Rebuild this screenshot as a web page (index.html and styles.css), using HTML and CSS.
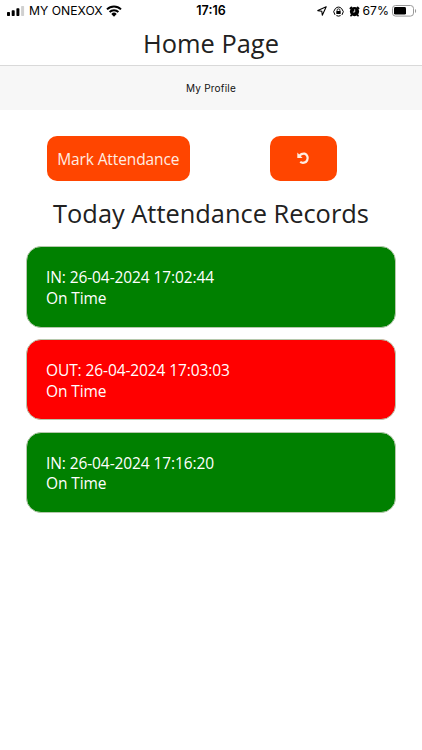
FILE: index.html
```
<!DOCTYPE html>
<html lang="en">
<head>
    <meta charset="UTF-8">
    <meta name="viewport" content="width=device-width, initial-scale=1.0">
    <title>Home Page</title>
    <link rel="stylesheet" href="styles.css">
</head>
<body>
    <div class="status-bar">
        <div class="status-left">
            <svg class="signal" width="18" height="10" viewBox="0 0 18 10">
                <rect x="0" y="6" width="3" height="4" rx="0.7"/>
                <rect x="4.7" y="4.3" width="3" height="5.7" rx="0.7"/>
                <rect x="9.4" y="2.2" width="3" height="7.8" rx="0.7"/>
                <rect class="dim" x="14.1" y="0" width="3" height="10" rx="0.7"/>
            </svg>
            <span class="carrier">MY ONEXOX</span>
            <svg class="wifi" width="16" height="12" viewBox="0 0 16 12">
                <path d="M1 4.4a10 10 0 0 1 14 0M3.6 7a6.3 6.3 0 0 1 8.8 0" fill="none" stroke="#000" stroke-width="2"/>
                <path d="M5.3 8.9a3.9 3.9 0 0 1 5.4 0L8 11.7z"/>
            </svg>
        </div>
        <div class="clock">17:16</div>
        <div class="status-right">
            <svg width="10" height="10" viewBox="0 0 10 10">
                <path d="M9.2.8L.8 4.6l4 .6.5 4z" fill="none" stroke="#000" stroke-width="1.1" stroke-linejoin="round"/>
            </svg>
            <svg class="lock" width="11" height="11" viewBox="0 0 11 11">
                <path d="M2 8.9A4.6 4.6 0 1 1 9 8.9M3.4 9.6a4.6 4.6 0 0 0 4.2 0" fill="none" stroke="#000" stroke-width="1"/>
                <rect x="3.3" y="5" width="4.4" height="3" rx="0.5"/>
                <path d="M4.1 5V4.2a1.4 1.4 0 0 1 2.8 0V5" fill="none" stroke="#000" stroke-width="0.8"/>
            </svg>
            <svg class="alarm" width="11" height="11" viewBox="0 0 11 11">
                <circle cx="5.5" cy="5.6" r="4.6"/>
                <path d="M1.4 2.3L2.4 1.4M9.6 2.3L8.6 1.4M2.4 9.2l-.4.4M8.6 9.2l.4.4" stroke="#000" stroke-width="1.8" stroke-linecap="round"/>
                <path d="M5.7 3.3V6H3.9" fill="none" stroke="#fff" stroke-width="0.8"/>
            </svg>
            <span class="percent">67%</span>
            <svg class="battery" width="25" height="12" viewBox="0 0 25 12">
                <rect x="0.5" y="0.5" width="21" height="10.6" rx="3" fill="none" stroke="#999"/>
                <rect x="2" y="2" width="12" height="7.6" rx="1.4"/>
                <path d="M23 4v4c1.5-.6 1.5-3.4 0-4z" fill="#999"/>
            </svg>
        </div>
    </div>

    <h1 class="title">Home Page</h1>

    <nav class="tabs">
        <a class="tab">My Profile</a>
    </nav>

    <main class="content">
        <div class="actions">
            <button class="btn mark">Mark Attendance</button>
            <button class="btn refresh" aria-label="Refresh">
                <svg width="13" height="13" viewBox="0 0 13 13">
                    <path d="M2.4 3.7C4 1.9 6 1.5 7.6 1.7A4.7 4.7 0 1 1 3.2 9.9" fill="none" stroke="#ffece2" stroke-width="2.3"/>
                    <path d="M.3.6V5.9H5.6z" fill="#ffece2"/>
                </svg>
            </button>
        </div>

        <h2 class="heading">Today Attendance Records</h2>

        <div class="records">
            <div class="record in">
                <div>IN: 26-04-2024 17:02:44</div>
                <div>On Time</div>
            </div>
            <div class="record out">
                <div>OUT: 26-04-2024 17:03:03</div>
                <div>On Time</div>
            </div>
            <div class="record in">
                <div>IN: 26-04-2024 17:16:20</div>
                <div>On Time</div>
            </div>
        </div>
    </main>
</body>
</html>
```

FILE: styles.css
```
* {
    box-sizing: border-box;
}

body {
    margin: 0;
    height: 750px;
    overflow: hidden;
    background-color: #fff;
    color: #212121;
    font-family: 'Open Sans', 'Noto Sans', sans-serif;
}

.status-bar {
    display: grid;
    grid-template-columns: 1fr auto 1fr;
    align-items: center;
    height: 22px;
    padding: 0 5px 0 7px;
    color: #000;
    font-family: Inter, 'Liberation Sans', sans-serif;
    font-size: 12.2px;
    line-height: 22px;
}

.status-left,
.status-right {
    display: flex;
    align-items: center;
}

.status-right {
    justify-content: flex-end;
}

.signal {
    margin-right: 4px;
}

.dim {
    fill: #d0d0d0;
}

.wifi {
    margin-left: 3px;
}

.clock {
    padding-right: 2px;
    font-size: 12.5px;
    font-weight: 600;
}

.lock {
    margin-left: 6px;
}

.alarm {
    margin-left: 5px;
}

.percent {
    margin-left: 3px;
}

.battery {
    margin-left: 3px;
}

.title {
    height: 43px;
    margin: 0;
    font-size: 25.4px;
    font-weight: 400;
    line-height: 43px;
    text-align: center;
}

.tabs {
    display: flex;
    justify-content: center;
    align-items: center;
    height: 45px;
    border-top: 1px solid #d9d9d9;
    background-color: #f7f7f7;
}

.tab {
    color: #111;
    font-family: Inter, sans-serif;
    font-size: 10px;
    letter-spacing: 0.2px;
}

.content {
    padding: 26px 26px 0;
}

.actions {
    display: flex;
    justify-content: space-between;
    padding: 0 59px 0 21px;
}

.btn {
    display: flex;
    justify-content: center;
    align-items: center;
    height: 44.5px;
    padding: 0;
    border: none;
    border-radius: 10px;
    background-color: #ff4500;
    color: #ffece2;
    font-family: inherit;
    font-size: 15.5px;
    letter-spacing: -0.11px;
}

.mark {
    width: 142.5px;
    padding-top: 1px;
}

.refresh {
    width: 67px;
}

.heading {
    margin: 13px 0 13.5px;
    font-size: 25.4px;
    font-weight: 400;
    line-height: 39px;
    text-align: center;
}

.records {
    display: flex;
    flex-direction: column;
    gap: 11.2px;
}

.record {
    height: 81.6px;
    padding: 20px 19px;
    border: 1px solid #b5c8ac;
    border-radius: 15px;
    color: #fff;
    font-size: 15.5px;
    letter-spacing: -0.1px;
    line-height: 20.8px;
}

.in {
    background-color: #008000;
}

.out {
    background-color: #ff0000;
}
```
